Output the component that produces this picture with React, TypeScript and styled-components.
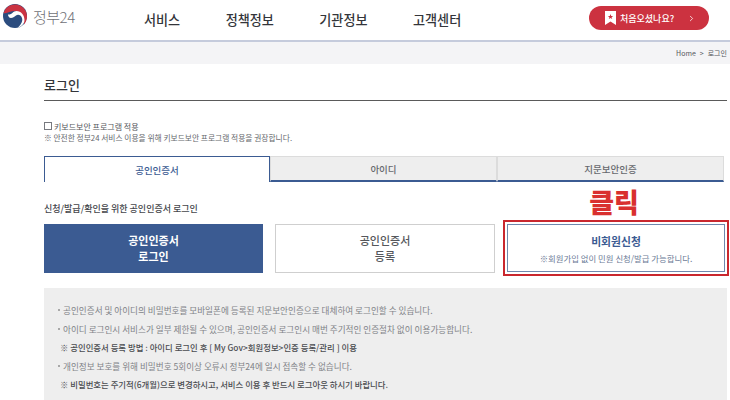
import { FunctionComponent } from "react"
import styled, { createGlobalStyle } from "styled-components"
import { ChevronRight } from "lucide-react"

const GlobalStyle = createGlobalStyle`
  html, body {
    margin: 0;
    padding: 0;
    background: #fff;
    overflow: hidden;
    font-family: "Noto Sans CJK KR", "Noto Sans", sans-serif;
  }
  * {
    box-sizing: border-box;
  }
`

const menus = ["서비스", "정책정보", "기관정보", "고객센터"]

const notices = [
  { text: "공인인증서 및 아이디의 비밀번호를 모바일폰에 등록된 지문보안인증으로 대체하여 로그인할 수 있습니다.", strong: false },
  { text: "아이디 로그인시 서비스가 일부 제한될 수 있으며, 공인인증서 로그인시 매번 주기적인 인증절차 없이 이용가능합니다.", strong: false },
  { text: "※ 공인인증서 등록 방법 : 아이디 로그인 후 [ My Gov>회원정보>인증 등록/관리 ] 이용", strong: true },
  { text: "개인정보 보호를 위해 비밀번호 5회이상 오류시 정부24에 일시 접속할 수 없습니다.", strong: false },
  { text: "※ 비밀번호는 주기적(6개월)으로 변경하시고, 서비스 이용 후 반드시 로그아웃 하시기 바랍니다.", strong: true },
]

const Logo: FunctionComponent = () => (
  <svg width="26" height="26" viewBox="0 0 26 26">
    <circle cx="13" cy="13" r="12" fill="#2b4c7e" />
    <path d="M1.5 10A12 12 0 0 1 25 13C25 16 24 19 22 21.5C22.8 14 18 8 13 8C8 8 5 11 1.5 10Z" fill="#cb3342" />
    <path d="M6 11.5C10 12 11 8 14.5 8C19 8 22.5 12 22.5 17C22.5 21 19 24 15.5 24.8C19 22 21 18 20 15C19 12 16 11 14 12.5C12 14 11 15 9 15C7 15 6 13 6 11.5Z" fill="#fff" />
  </svg>
)

const App: FunctionComponent = () => {
  return (
    <Page>
      <GlobalStyle />
      <Header>
        <Brand>
          <Logo />
          <BrandName>정부24</BrandName>
        </Brand>
        <Nav>
          {menus.map((menu) => (
            <NavItem key={menu}>{menu}</NavItem>
          ))}
        </Nav>
        <FirstVisit>
          <svg width="11" height="14" viewBox="0 0 11 14">
            <path d="M0 0H11V14L5.5 10.5L0 14Z" fill="#fff" />
            <path d="M5.5 3L6.2 4.9L8.2 5L6.6 6.2L7.2 8.1L5.5 7L3.8 8.1L4.4 6.2L2.8 5L4.8 4.9Z" fill="#cc3240" />
          </svg>
          <FirstVisitLabel>처음오셨나요?</FirstVisitLabel>
          <Chevron>
            <ChevronRight size={9} strokeWidth={2} />
          </Chevron>
        </FirstVisit>
      </Header>
      <Crumbs>
        <span>Home</span>
        <span>&gt;</span>
        <span>로그인</span>
      </Crumbs>
      <Content>
        <PageTitle>로그인</PageTitle>
        <KeyboardRow>
          <CheckBox />
          키보드보안 프로그램 적용
        </KeyboardRow>
        <KeyboardNote>※ 안전한 정부24 서비스 이용을 위해 키보드보안 프로그램 적용을 권장합니다.</KeyboardNote>
        <Tabs>
          <Tab $active>공인인증서</Tab>
          <Tab>아이디</Tab>
          <Tab>지문보안인증</Tab>
        </Tabs>
        <SubHeadRow>
          <SubHead>신청/발급/확인을 위한 공인인증서 로그인</SubHead>
          <ClickLabel>클릭</ClickLabel>
        </SubHeadRow>
        <Actions>
          <PrimaryAction>
            공인인증서
            <br />
            로그인
          </PrimaryAction>
          <PlainAction>
            공인인증서
            <br />
            등록
          </PlainAction>
          <Highlight>
            <GuestAction>
              <GuestTitle>비회원신청</GuestTitle>
              <GuestNote>※회원가입 없이 민원 신청/발급 가능합니다.</GuestNote>
            </GuestAction>
          </Highlight>
        </Actions>
        <NoticeBox>
          {notices.map((notice) => (
            <Notice key={notice.text} $strong={notice.strong}>
              {!notice.strong && <Bullet />}
              {notice.text}
            </Notice>
          ))}
        </NoticeBox>
      </Content>
    </Page>
  )
}

const Page = styled.div`
  width: 730px;
  height: 400px;
  overflow: hidden;
  background: #fff;
`

const Header = styled.header`
  display: flex;
  align-items: center;
  height: 42px;
  padding-bottom: 2px;
  border-bottom: 2px solid #c5cbdc;
`

const Brand = styled.div`
  display: flex;
  align-items: center;
  gap: 5px;
  width: 144px;
  padding: 0 0 6px 2px;
`

const BrandName = styled.span`
  font-size: 15px;
  font-weight: 300;
  color: #6f7177;
  letter-spacing: -0.5px;
`

const Nav = styled.nav`
  display: flex;
  gap: 45.5px;
  width: 445px;
`

const NavItem = styled.span`
  font-size: 13.1px;
  font-weight: 500;
  color: #33353a;
  white-space: nowrap;
`

const FirstVisit = styled.div`
  display: flex;
  align-items: center;
  width: 120px;
  height: 24px;
  margin-bottom: 2px;
  padding-left: 16px;
  border-radius: 12px;
  background: #cc3240;
`

const FirstVisitLabel = styled.span`
  margin-left: 4px;
  font-size: 9px;
  font-weight: 500;
  color: #fff;
  white-space: nowrap;
`

const Chevron = styled.span`
  display: flex;
  margin-left: 13px;
  color: #fff;
`

const Crumbs = styled.div`
  display: flex;
  justify-content: flex-end;
  align-items: center;
  gap: 4px;
  height: 22px;
  padding-right: 3px;
  background: #f4f4f6;
  font-size: 7px;
  color: #55575c;
`

const Content = styled.main`
  padding: 0 3px 0 44px;
`

const PageTitle = styled.h1`
  margin: 0;
  padding: 11px 0 6px;
  border-bottom: 1px solid #5a5a5a;
  font-size: 13px;
  line-height: 19px;
  font-weight: 500;
  color: #33353a;
`

const KeyboardRow = styled.div`
  display: flex;
  align-items: center;
  gap: 2px;
  margin-top: 19px;
  height: 12px;
  font-size: 8px;
  color: #55575c;
`

const CheckBox = styled.span`
  width: 8px;
  height: 8px;
  border: 1px solid #77797f;
  background: #fff;
`

const KeyboardNote = styled.div`
  height: 12px;
  font-size: 7.75px;
  line-height: 12px;
  color: #66686d;
  white-space: nowrap;
`

const Tabs = styled.div`
  display: grid;
  grid-template-columns: 226px 227px 227px;
  width: 680px;
  margin-top: 12px;
`

const Tab = styled.div<{ $active?: boolean }>`
  display: flex;
  justify-content: center;
  align-items: center;
  height: 26px;
  font-size: 9.5px;
  font-weight: 500;
  color: ${(p) => (p.$active ? "#3b5b92" : "#66686d")};
  background: ${(p) => (p.$active ? "#fff" : "#eeeeee")};
  border: 1px solid ${(p) => (p.$active ? "#3b5b92" : "#dcdcdc")};
  border-bottom: ${(p) => (p.$active ? "none" : "2px solid #3b5b92")};
`

const SubHeadRow = styled.div`
  display: flex;
  align-items: center;
  height: 38px;
`

const SubHead = styled.div`
  width: 460px;
  padding-top: 15px;
  font-size: 9px;
  font-weight: 500;
  color: #44464b;
`

const ClickLabel = styled.div`
  width: 220px;
  padding-top: 2px;
  text-align: center;
  font-size: 27px;
  line-height: 30px;
  font-weight: 900;
  color: #d9302f;
`

const Actions = styled.div`
  display: flex;
  align-items: center;
  height: 56px;
`

const PrimaryAction = styled.div`
  display: flex;
  flex: none;
  justify-content: center;
  align-items: center;
  width: 219px;
  height: 49px;
  text-align: center;
  font-size: 11px;
  line-height: 16px;
  font-weight: 700;
  color: #fff;
  background: #3b5b92;
`

const PlainAction = styled.div`
  display: flex;
  flex: none;
  justify-content: center;
  align-items: center;
  width: 220px;
  height: 49px;
  margin-left: 12px;
  text-align: center;
  font-size: 11px;
  line-height: 16px;
  font-weight: 500;
  color: #55575c;
  border: 1px solid #cfcfcf;
`

const Highlight = styled.div`
  flex: none;
  width: 226px;
  height: 56px;
  margin-left: 8px;
  padding: 2px;
  border: 2px solid #c9272e;
`

const GuestAction = styled.div`
  display: flex;
  flex-direction: column;
  justify-content: center;
  align-items: center;
  gap: 3px;
  height: 100%;
  border: 1px solid #6f88ad;
`

const GuestTitle = styled.div`
  font-size: 10.8px;
  font-weight: 700;
  color: #3b5b92;
`

const GuestNote = styled.div`
  font-size: 8.4px;
  color: #6b7a96;
  white-space: nowrap;
`

const NoticeBox = styled.section`
  display: flex;
  flex-direction: column;
  width: 683px;
  height: 112px;
  margin-top: 12px;
  padding: 13px 0 0 14px;
  background: #eeeeee;
`

const Notice = styled.div<{ $strong: boolean }>`
  display: flex;
  align-items: center;
  height: 18.5px;
  padding-left: ${(p) => (p.$strong ? "2px" : "0")};
  font-size: ${(p) => (p.$strong ? "8.4px" : "8.6px")};
  font-weight: ${(p) => (p.$strong ? 500 : 400)};
  color: ${(p) => (p.$strong ? "#4a4c50" : "#808287")};
  white-space: nowrap;
`

const Bullet = styled.span`
  width: 2px;
  height: 2px;
  margin-right: 3px;
  background: #a8a8a8;
`

export default App
